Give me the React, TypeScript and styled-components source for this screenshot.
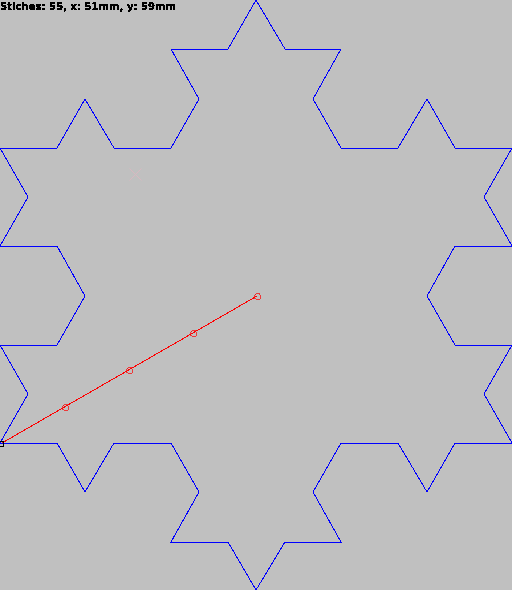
import React from "react";
import styled, { createGlobalStyle } from "styled-components";

const Global = createGlobalStyle`
  html, body { margin: 0; padding: 0; background: #c0c0c0; }
`;

const Stage = styled.main`
  position: relative;
  width: 512px;
  height: 590px;
  overflow: hidden;
  background: #c0c0c0;
`;

const Status = styled.div`
  position: absolute;
  left: 0;
  top: 0;
  font-family: "DejaVu Sans", sans-serif;
  font-weight: 700;
  font-size: 10px;
  line-height: 13px;
  letter-spacing: 0.05px;
  color: #000;
  white-space: nowrap;
  filter: url(#crisp-text);
`;

const Drawing = styled.svg`
  display: block;
  width: 512px;
  height: 590px;
  shape-rendering: crispEdges;
`;

const Mark = styled.path`
  shape-rendering: geometricPrecision;
`;

const outline =
  "0,443 28,394 0,345 57,345 85,296 57,246 0,246 28,197 0,148 57,148 85,99 114,148 171,148 199,99 171,49 228,49 256,0 285,49 341,49 313,99 341,148 398,148 427,99 455,148 512,148 484,197 512,246 455,246 427,296 455,345 512,345 484,394 512,443 455,443 427,492 398,443 341,443 313,492 341,542 285,542 256,590 228,542 171,542 199,492 171,443 114,443 85,492 57,443 0,443";

const stitches = [
  [65, 407],
  [129, 370],
  [193, 333],
  [257, 296],
];

export default function App() {
  return (
    <Stage>
      <Global />
      <Drawing viewBox="0 0 512 590">
        <defs>
          <filter id="crisp-text" x="0" y="0" width="100%" height="100%">
            <feComponentTransfer>
              <feFuncA type="discrete" tableValues="0 1 1 1" />
            </feComponentTransfer>
          </filter>
        </defs>
        <polyline points={outline} fill="none" stroke="#0000ff" strokeWidth="1" />
        <Mark d="M129.5 168.5l12 12M141.5 168.5l-12 12" stroke="#d8b8c0" strokeWidth="1" fill="none" />
        <line x1="2" y1="443" x2="257" y2="296" stroke="#ff0000" strokeWidth="1" />
        {stitches.map(([x, y]) => (
          <circle key={x} cx={x + 0.5} cy={y + 0.5} r="3" fill="none" stroke="#ff0000" strokeWidth="0.7" />
        ))}
        <rect x="-2.5" y="441.5" width="6" height="5" fill="none" stroke="#000" strokeWidth="1" />
      </Drawing>
      <Status>Stiches: 55, x: 51mm, y: 59mm</Status>
    </Stage>
  );
}
